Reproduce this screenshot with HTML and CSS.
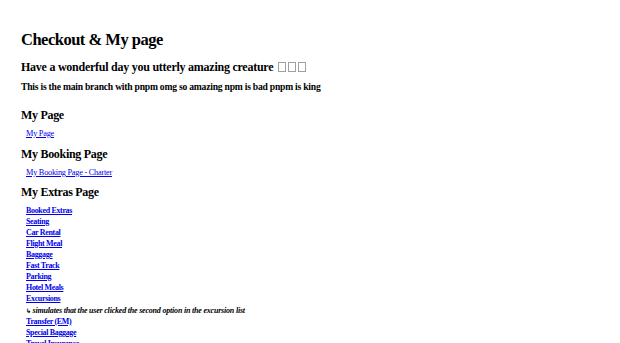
FILE: index.html
```html
<!DOCTYPE html>
<html lang="en">
<head>
    <meta charset="UTF-8">
    <meta name="viewport" content="width=device-width, initial-scale=1.0">
    <title>Checkout &amp; My page</title>
    <link rel="stylesheet" href="styles.css">
</head>
<body>
    <div class="page">
        <h1>Checkout &amp; My page</h1>
        <h2 class="greeting">Have a wonderful day you utterly amazing creature <span class="tofu"></span><span class="tofu"></span><span class="tofu"></span></h2>
        <h3 class="branch">This is the main branch with pnpm omg so amazing npm is bad pnpm is king</h3>

        <section class="group">
            <h2>My Page</h2>
            <ul class="links">
                <li><a href="#">My Page</a></li>
            </ul>
        </section>

        <section class="group">
            <h2>My Booking Page</h2>
            <ul class="links">
                <li><a href="#">My Booking Page - Charter</a></li>
            </ul>
        </section>

        <section class="group">
            <h2>My Extras Page</h2>
            <ul class="links extras">
                <li><a href="#">Booked Extras</a></li>
                <li><a href="#">Seating</a></li>
                <li><a href="#">Car Rental</a></li>
                <li><a href="#">Flight Meal</a></li>
                <li><a href="#">Baggage</a></li>
                <li><a href="#">Fast Track</a></li>
                <li><a href="#">Parking</a></li>
                <li><a href="#">Hotel Meals</a></li>
                <li><a href="#">Excursions</a></li>
                <li class="note"><span class="arrow">&#8627;</span> simulates that the user clicked the second option in the excursion list</li>
                <li><a href="#">Transfer (EM)</a></li>
                <li><a href="#">Special Baggage</a></li>
                <li><a href="#">Travel Insurance</a></li>
            </ul>
        </section>
    </div>
</body>
</html>
```

FILE: styles.css
```css
body {
    font-family: 'Liberation Serif', 'Times New Roman', serif;
    margin: 0;
    padding: 0;
    background-color: #ffffff;
    color: #000000;
}

.page {
    padding: 31px 21px 0 21px;
}

h1 {
    font-size: 16.5px;
    letter-spacing: -0.5px;
    line-height: 18px;
    margin: 0;
}

h2 {
    font-size: 12px;
    letter-spacing: -0.3px;
    line-height: 14px;
    margin: 0;
}

.greeting {
    margin-top: 11px;
    letter-spacing: -0.25px;
}

.tofu {
    display: inline-block;
    width: 6px;
    height: 8px;
    border: 1px solid #a0a0a0;
    margin-left: 2px;
    vertical-align: -1px;
}

.branch {
    font-size: 9.6px;
    letter-spacing: -0.22px;
    line-height: 11px;
    margin: 7px 0 0 0;
}

.group {
    margin-top: 8px;
}

.group:first-of-type {
    margin-top: 16px;
}

.group:last-of-type {
    margin-top: 7px;
}

.links {
    list-style: none;
    margin: 7px 0 0 0;
    padding: 0 0 0 5px;
    font-size: 8.3px;
    letter-spacing: -0.25px;
    line-height: 10px;
}

.extras {
    margin-top: 6px;
    font-size: 8px;
    letter-spacing: -0.34px;
    line-height: 11px;
    font-weight: bold;
}

.links a {
    color: #0000ee;
}

.note {
    font-style: italic;
    letter-spacing: -0.2px;
    padding-top: 2px;
    line-height: 9px;
}

.arrow {
    font-style: normal;
    font-size: 6px;
}
```
